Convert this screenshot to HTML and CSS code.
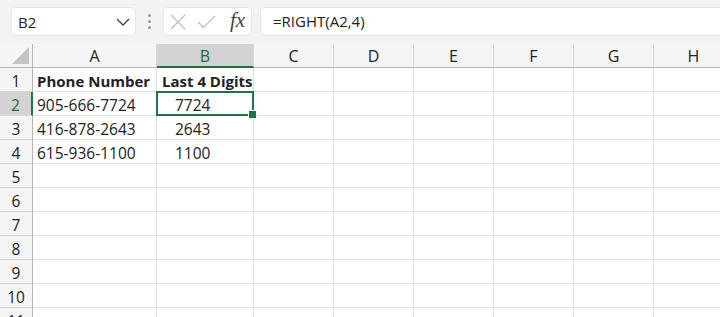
FILE: index.html
```html
<!DOCTYPE html>
<html lang="en">
<head>
    <meta charset="UTF-8">
    <meta name="viewport" content="width=device-width, initial-scale=1.0">
    <title>RIGHT function</title>
    <link rel="stylesheet" href="styles.css">
</head>
<body>
    <div class="toolbar">
        <div class="namebox">
            <span class="ref">B2</span>
            <svg class="chevron" width="14" height="8" viewBox="0 0 14 8"><path d="M1 1 L7 7 L13 1" fill="none" stroke="#444" stroke-width="1.3"/></svg>
        </div>
        <div class="grip"><i></i><i></i><i></i></div>
        <div class="fxbox">
            <svg class="cancel" width="16" height="16" viewBox="0 0 16 16"><path d="M1 1 L15 15 M15 1 L1 15" fill="none" stroke="#bdbdbd" stroke-width="1.2"/></svg>
            <svg class="enter" width="19" height="14" viewBox="0 0 19 14"><path d="M1 7 L6.5 12.5 L18 1" fill="none" stroke="#bdbdbd" stroke-width="1.2"/></svg>
            <span class="fx">fx</span>
        </div>
        <div class="formula">=RIGHT(A2,4)</div>
    </div>

    <div class="sheet">
        <div class="corner"><span class="tri"></span></div>
        <div class="colhead">A</div>
        <div class="colhead active">B</div>
        <div class="colhead">C</div>
        <div class="colhead">D</div>
        <div class="colhead">E</div>
        <div class="colhead">F</div>
        <div class="colhead">G</div>
        <div class="colhead">H</div>

        <div class="rowhead">1</div>
        <div class="cell bold">Phone Number</div>
        <div class="cell bold head-b">Last 4 Digits</div>
        <div class="cell"></div><div class="cell"></div><div class="cell"></div><div class="cell"></div><div class="cell"></div><div class="cell"></div>

        <div class="rowhead active">2</div>
        <div class="cell">905-666-7724</div>
        <div class="cell indent selected">7724</div>
        <div class="cell"></div><div class="cell"></div><div class="cell"></div><div class="cell"></div><div class="cell"></div><div class="cell"></div>

        <div class="rowhead">3</div>
        <div class="cell">416-878-2643</div>
        <div class="cell indent">2643</div>
        <div class="cell"></div><div class="cell"></div><div class="cell"></div><div class="cell"></div><div class="cell"></div><div class="cell"></div>

        <div class="rowhead">4</div>
        <div class="cell">615-936-1100</div>
        <div class="cell indent">1100</div>
        <div class="cell"></div><div class="cell"></div><div class="cell"></div><div class="cell"></div><div class="cell"></div><div class="cell"></div>

        <div class="rowhead">5</div>
        <div class="cell"></div><div class="cell"></div><div class="cell"></div><div class="cell"></div><div class="cell"></div><div class="cell"></div><div class="cell"></div><div class="cell"></div>
        <div class="rowhead">6</div>
        <div class="cell"></div><div class="cell"></div><div class="cell"></div><div class="cell"></div><div class="cell"></div><div class="cell"></div><div class="cell"></div><div class="cell"></div>
        <div class="rowhead">7</div>
        <div class="cell"></div><div class="cell"></div><div class="cell"></div><div class="cell"></div><div class="cell"></div><div class="cell"></div><div class="cell"></div><div class="cell"></div>
        <div class="rowhead">8</div>
        <div class="cell"></div><div class="cell"></div><div class="cell"></div><div class="cell"></div><div class="cell"></div><div class="cell"></div><div class="cell"></div><div class="cell"></div>
        <div class="rowhead">9</div>
        <div class="cell"></div><div class="cell"></div><div class="cell"></div><div class="cell"></div><div class="cell"></div><div class="cell"></div><div class="cell"></div><div class="cell"></div>
        <div class="rowhead">10</div>
        <div class="cell"></div><div class="cell"></div><div class="cell"></div><div class="cell"></div><div class="cell"></div><div class="cell"></div><div class="cell"></div><div class="cell"></div>
        <div class="rowhead">11</div>
        <div class="cell"></div><div class="cell"></div><div class="cell"></div><div class="cell"></div><div class="cell"></div><div class="cell"></div><div class="cell"></div><div class="cell"></div>
    </div>
</body>
</html>
```

FILE: styles.css
```css
* {
    box-sizing: border-box;
}
body {
    margin: 0;
    width: 720px;
    height: 317px;
    overflow: hidden;
    font-family: 'Open Sans', 'Noto Sans', sans-serif;
    color: #222;
    background: #fff;
}

/* Formula bar */
.toolbar {
    display: flex;
    align-items: flex-start;
    height: 44px;
    padding: 7px 0 0 11px;
    background: #f3f3f3;
}
.namebox,
.fxbox,
.formula {
    height: 29px;
    background: #fff;
    border: 1px solid #e6e6e6;
    border-radius: 5px;
}
.namebox {
    width: 125px;
    display: flex;
    align-items: center;
    justify-content: space-between;
    padding: 0 5px 0 6px;
}
.ref {
    font-size: 15px;
}
.chevron {
    display: block;
}
.grip {
    width: 27px;
    height: 29px;
    display: flex;
    flex-direction: column;
    align-items: center;
    justify-content: center;
    gap: 3px;
}
.grip i {
    width: 3px;
    height: 3px;
    border-radius: 50%;
    background: #9a9a9a;
}
.fxbox {
    width: 89px;
    display: flex;
    align-items: center;
    padding-left: 6px;
}
.cancel {
    display: block;
}
.enter {
    display: block;
    margin-left: 11px;
}
.fx {
    margin-left: 14px;
    font-family: 'Liberation Serif', serif;
    font-style: italic;
    font-size: 21px;
    line-height: 1;
    color: #444;
    margin-top: -3px;
}
.formula {
    flex: 1;
    margin-left: 8px;
    margin-right: -8px;
    padding-left: 12px;
    font-size: 15px;
    line-height: 27px;
}

/* Grid */
.sheet {
    display: grid;
    grid-template-columns: 33px 124px 97px repeat(6, 80px);
    grid-auto-rows: 24px;
    font-size: 15.5px;
}
.corner {
    position: relative;
    background: #f5f5f5;
    border-right: 1px solid #b5b5b5;
    border-bottom: 1px solid #b5b5b5;
}
.tri {
    position: absolute;
    right: 3px;
    bottom: 3px;
    width: 0;
    height: 0;
    border-left: 17px solid transparent;
    border-bottom: 17px solid #c4c4c4;
}
.colhead {
    background: #f5f5f5;
    border-right: 1px solid #d6d6d6;
    border-bottom: 1px solid #b5b5b5;
    text-align: center;
    font-size: 16px;
    line-height: 22px;
    padding-top: 1px;
}
.colhead.active {
    background: #d3d3d3;
    color: #1e6b41;
    border-bottom: 2px solid #217346;
}
.rowhead {
    background: #f5f5f5;
    border-right: 1px solid #b5b5b5;
    border-bottom: 1px solid #d6d6d6;
    text-align: center;
    padding-top: 3px;
    line-height: 20px;
    font-size: 15.5px;
}
.rowhead.active {
    background: #d3d3d3;
    color: #1e6b41;
    border-right: 2px solid #217346;
}
.cell {
    border-right: 1px solid #e1e1e1;
    border-bottom: 1px solid #e1e1e1;
    padding: 4px 0 0 4px;
    line-height: 19px;
    white-space: nowrap;
}
.bold {
    font-weight: bold;
    font-size: 15px;
}
.head-b {
    padding-left: 5px;
}
.indent {
    padding-left: 18px;
}
.selected {
    position: relative;
}
.selected::before {
    content: "";
    position: absolute;
    left: -1px;
    top: -1px;
    right: -1px;
    bottom: -1px;
    border: 2px solid #217346;
}
.selected::after {
    content: "";
    position: absolute;
    right: -4px;
    bottom: -4px;
    width: 7px;
    height: 7px;
    background: #217346;
    border: 1px solid #fff;
}
```
